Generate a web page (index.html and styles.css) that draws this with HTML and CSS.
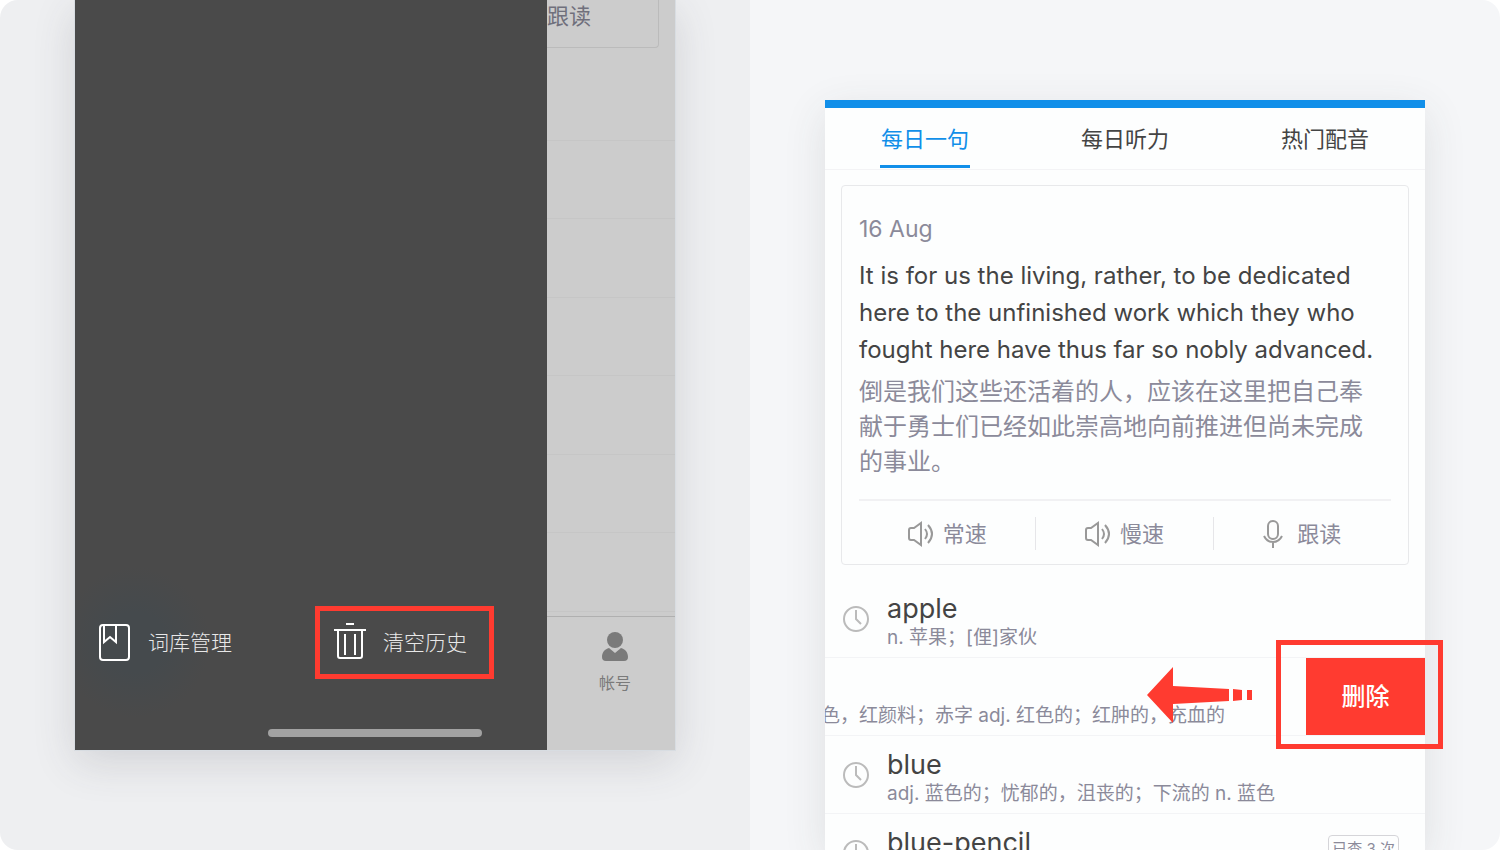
FILE: index.html
```html
<!DOCTYPE html>
<html lang="zh-CN">
<head>
    <meta charset="utf-8">
    <title>历史记录</title>
    <link rel="stylesheet" href="styles.css">
</head>
<body>
    <main class="stage">
        <section class="panel panel-left">
            <div class="phone phone-menu">
                <nav class="drawer">
                    <button class="drawer-btn">
                        <svg class="drawer-icon" width="34" height="40" viewBox="0 0 34 40">
                            <rect x="2" y="2" width="29" height="35" rx="3"/>
                            <path d="M6 2v17l6-5 6 5V2"/>
                        </svg>
                        词库管理
                    </button>
                    <button class="drawer-btn marked">
                        <svg class="drawer-icon" width="34" height="40" viewBox="0 0 34 40">
                            <path d="M13 1h8M1 7h32M5 7v26q0 2 2 2h20q2 0 2-2V7M12 11v21M22 11v21"/>
                        </svg>
                        清空历史
                    </button>
                </nav>
                <div class="behind">
                    <div class="behind-card">跟读</div>
                    <ul class="behind-list">
                        <li></li><li></li><li></li><li></li><li></li><li></li><li></li>
                    </ul>
                    <div class="tabbar">
                        <a class="tabbar-item" href="#">
                            <svg width="28" height="30" viewBox="0 0 28 30">
                                <circle cx="14" cy="8" r="8"/>
                                <path d="M8 16L14 21L20 16C24 17 27 20 27 25Q27 29 23 29H5Q1 29 1 25C1 20 4 17 8 16Z"/>
                            </svg>
                            帐号
                        </a>
                    </div>
                </div>
                <div class="home-bar"></div>
            </div>
        </section>

        <section class="panel panel-right">
            <div class="phone phone-list">
                <nav class="tabs">
                    <a class="tab active" href="#">每日一句</a>
                    <a class="tab" href="#">每日听力</a>
                    <a class="tab" href="#">热门配音</a>
                </nav>

                <article class="card">
                    <div class="date">16 Aug</div>
                    <p class="english">It is for us the living, rather, to be dedicated<br>here to the unfinished work which they who<br>fought here have thus far so nobly advanced.</p>
                    <p class="chinese">倒是我们这些还活着的人，应该在这里把自己奉<br>献于勇士们已经如此崇高地向前推进但尚未完成<br>的事业。</p>
                    <div class="actions">
                        <button class="action">
                            <svg width="26" height="26" viewBox="0 0 26 26">
                                <path d="M1 9q0-2 2-2h3l7-5v22l-7-5H3q-2 0-2-2zM17 8q4 5 0 10M20 4q8 9 0 18"/>
                            </svg>
                            常速
                        </button>
                        <button class="action">
                            <svg width="26" height="26" viewBox="0 0 26 26">
                                <path d="M1 9q0-2 2-2h3l7-5v22l-7-5H3q-2 0-2-2zM17 8q4 5 0 10M20 4q8 9 0 18"/>
                            </svg>
                            慢速
                        </button>
                        <button class="action action-mic">
                            <svg width="20" height="28" viewBox="0 0 20 28">
                                <rect x="5" y="1" width="10" height="18" rx="5"/>
                                <path d="M1 16q3 6 9 6t9-6M10 22v6"/>
                            </svg>
                            跟读
                        </button>
                    </div>
                </article>

                <ul class="words">
                    <li class="word">
                        <svg class="clock" width="26" height="26" viewBox="0 0 26 26"><circle cx="13" cy="13" r="12"/><path d="M13 4v9l5 5"/></svg>
                        <div class="word-text">
                            <div class="term">apple</div>
                            <div class="meaning">n. 苹果；[俚]家伙</div>
                        </div>
                    </li>
                    <li class="word swiped">
                        <div class="swiped-text">
                            <div class="meaning">色，红颜料；赤字 adj. 红色的；红肿的，充血的</div>
                        </div>
                        <button class="delete">删除</button>
                        <svg class="arrow" width="106" height="56" viewBox="0 0 106 56">
                            <path d="M0 28L26 0V19L82 22V34L26 37V56ZM86 22L95 23V33L86 34ZM100 23L105 23V33L100 33Z"/>
                        </svg>
                        <div class="frame"></div>
                    </li>
                    <li class="word">
                        <svg class="clock" width="26" height="26" viewBox="0 0 26 26"><circle cx="13" cy="13" r="12"/><path d="M13 4v9l5 5"/></svg>
                        <div class="word-text">
                            <div class="term">blue</div>
                            <div class="meaning">adj. 蓝色的；忧郁的，沮丧的；下流的 n. 蓝色</div>
                        </div>
                    </li>
                    <li class="word">
                        <svg class="clock" width="26" height="26" viewBox="0 0 26 26"><circle cx="13" cy="13" r="12"/><path d="M13 4v9l5 5"/></svg>
                        <div class="word-text">
                            <div class="term">blue-pencil</div>
                        </div>
                        <span class="count">已查 3 次</span>
                    </li>
                </ul>
            </div>
        </section>
    </main>
</body>
</html>
```

FILE: styles.css
```css
* {
    box-sizing: border-box;
}
body {
    margin: 0;
    background: #fff;
    font-family: Inter, "Noto Sans CJK SC", sans-serif;
    color: #444;
}
ul, p {
    margin: 0;
    padding: 0;
    list-style: none;
}
button {
    font-family: inherit;
    line-height: 24px;
    background: none;
    border: none;
    padding: 0;
    cursor: pointer;
}
a {
    color: inherit;
    text-decoration: none;
}
svg {
    flex: none;
}
.stage {
    display: grid;
    grid-template-columns: 1fr 1fr;
    height: 100vh;
    border-radius: 18px;
    overflow: hidden;
}
.panel {
    display: flex;
    min-width: 0;
    min-height: 0;
    overflow: hidden;
}
.panel-left {
    padding: 0 10% 100px;
    background: #eeeff1;
}
.panel-right {
    padding: 100px 10% 0;
    background: #f5f6f8;
}
.phone {
    position: relative;
    flex: 1;
    min-width: 0;
}

/* left phone: open drawer */
.phone-menu {
    display: flex;
    background: #ccc;
    box-shadow: 0 0 0 1px #d8dde2, 0 12px 40px rgba(60, 65, 75, 0.16);
}
.drawer {
    flex: 1;
    display: flex;
    align-items: flex-end;
    justify-content: space-between;
    padding: 0 53px 71px 23px;
    background: radial-gradient(circle at 60px 642px, #454a4d 30px, #4a4a4a 75px);
}
.drawer-btn {
    display: flex;
    align-items: center;
    gap: 16px;
    height: 73px;
    color: #e8e8e8;
    font-size: 21px;
    font-weight: 300;
}
.drawer-icon {
    fill: none;
    stroke: #fff;
    stroke-width: 2;
}
.marked {
    padding: 0 22px 0 13px;
    border: 5px solid #ff3b30;
}
.behind {
    display: flex;
    flex-direction: column;
    width: 128px;
}
.behind-card {
    height: 48px;
    margin-right: 16px;
    border: solid #bbb;
    border-width: 0 1px 1px 0;
    border-radius: 0 0 4px 0;
    color: #70707c;
    font-size: 22px;
    line-height: 32px;
}
.behind-list {
    flex: 1;
    display: grid;
    padding: 14px 0 4px;
}
.behind-list li {
    border-bottom: 1px solid #c6c6c6;
}
.tabbar {
    display: flex;
    justify-content: flex-end;
    height: 134px;
    padding-top: 15px;
    border-top: 1px solid #b0b0b0;
}
.tabbar-item {
    display: flex;
    flex-direction: column;
    align-items: center;
    gap: 8px;
    width: 120px;
    color: #7a7a7a;
    font-size: 16px;
}
.tabbar-item svg {
    fill: #7a7a7a;
}
.home-bar {
    position: absolute;
    left: 50%;
    bottom: 13px;
    width: 214px;
    height: 8px;
    margin-left: -107px;
    border-radius: 4px;
    background: #a2a2a2;
}

/* right phone: history list */
.phone-list {
    background: #fdfefe;
    border-top: 8px solid #118fe9;
    box-shadow: 0 12px 40px rgba(60, 62, 65, 0.12);
}
.tabs {
    display: flex;
    justify-content: space-around;
    height: 62px;
    border-bottom: 1px solid #f3f3f5;
}
.tab {
    height: 60px;
    padding: 0 1px;
    font-size: 22px;
    line-height: 62px;
}
.active {
    color: #118fe9;
    border-bottom: 3px solid #118fe9;
}
.card {
    margin: 15px 16px;
    padding: 26px 17px 0;
    border: 1px solid #e8e9eb;
    border-radius: 4px;
}
.date {
    color: #8b8a9a;
    font-size: 23px;
    line-height: 34px;
    margin-bottom: 11px;
}
.english {
    font-size: 24px;
    line-height: 37px;
    white-space: nowrap;
}
.chinese {
    margin-top: 6px;
    padding-bottom: 20px;
    border-bottom: 2px solid #f1f1f3;
    color: #8b8a9a;
    font-size: 24px;
    line-height: 35px;
    white-space: nowrap;
}
.actions {
    display: grid;
    grid-template-columns: 1fr 1fr 1fr;
    padding: 16px 0 14px;
}
.action {
    display: flex;
    align-items: center;
    justify-content: center;
    gap: 9px;
    height: 33px;
    border-right: 1px solid #e6e6e9;
    color: #8b8a9a;
    font-size: 22px;
}
.action-mic {
    gap: 14px;
    border-right: none;
}
.action svg {
    fill: none;
    stroke: #999;
    stroke-width: 2;
}
.word {
    display: flex;
    align-items: center;
    height: 78px;
    padding: 0 26px 0 18px;
    border-bottom: 1px solid #f3f4f6;
}
.clock {
    fill: none;
    stroke: #bbb;
    stroke-width: 2;
}
.word-text {
    flex: 1;
    align-self: flex-start;
    margin-left: 18px;
    padding-top: 12px;
}
.term {
    font-size: 27px;
    line-height: 34px;
}
.meaning {
    color: #8b8a9a;
    font-size: 19px;
    line-height: 24px;
    white-space: nowrap;
}
.swiped {
    position: relative;
    padding: 0;
}
.swiped-text {
    flex: 1;
    display: flex;
    align-items: flex-end;
    justify-content: flex-end;
    height: 100%;
    padding: 0 81px 7px 0;
    overflow: hidden;
}
.delete {
    width: 119px;
    height: 100%;
    background: #ff3b30;
    color: #fff;
    font-size: 24px;
    font-weight: 500;
}
.arrow {
    position: absolute;
    right: 172px;
    top: 9px;
    fill: #ff3b30;
}
.frame {
    position: absolute;
    top: -18px;
    right: -18px;
    width: 167px;
    height: 109px;
    border: 5px solid #ff3b30;
}
.count {
    align-self: flex-start;
    margin-top: 21px;
    padding: 0 3px;
    border: 1px solid #d5d5d9;
    border-radius: 4px;
    color: #8b8a9a;
    font-size: 15px;
    line-height: 26px;
}
```
